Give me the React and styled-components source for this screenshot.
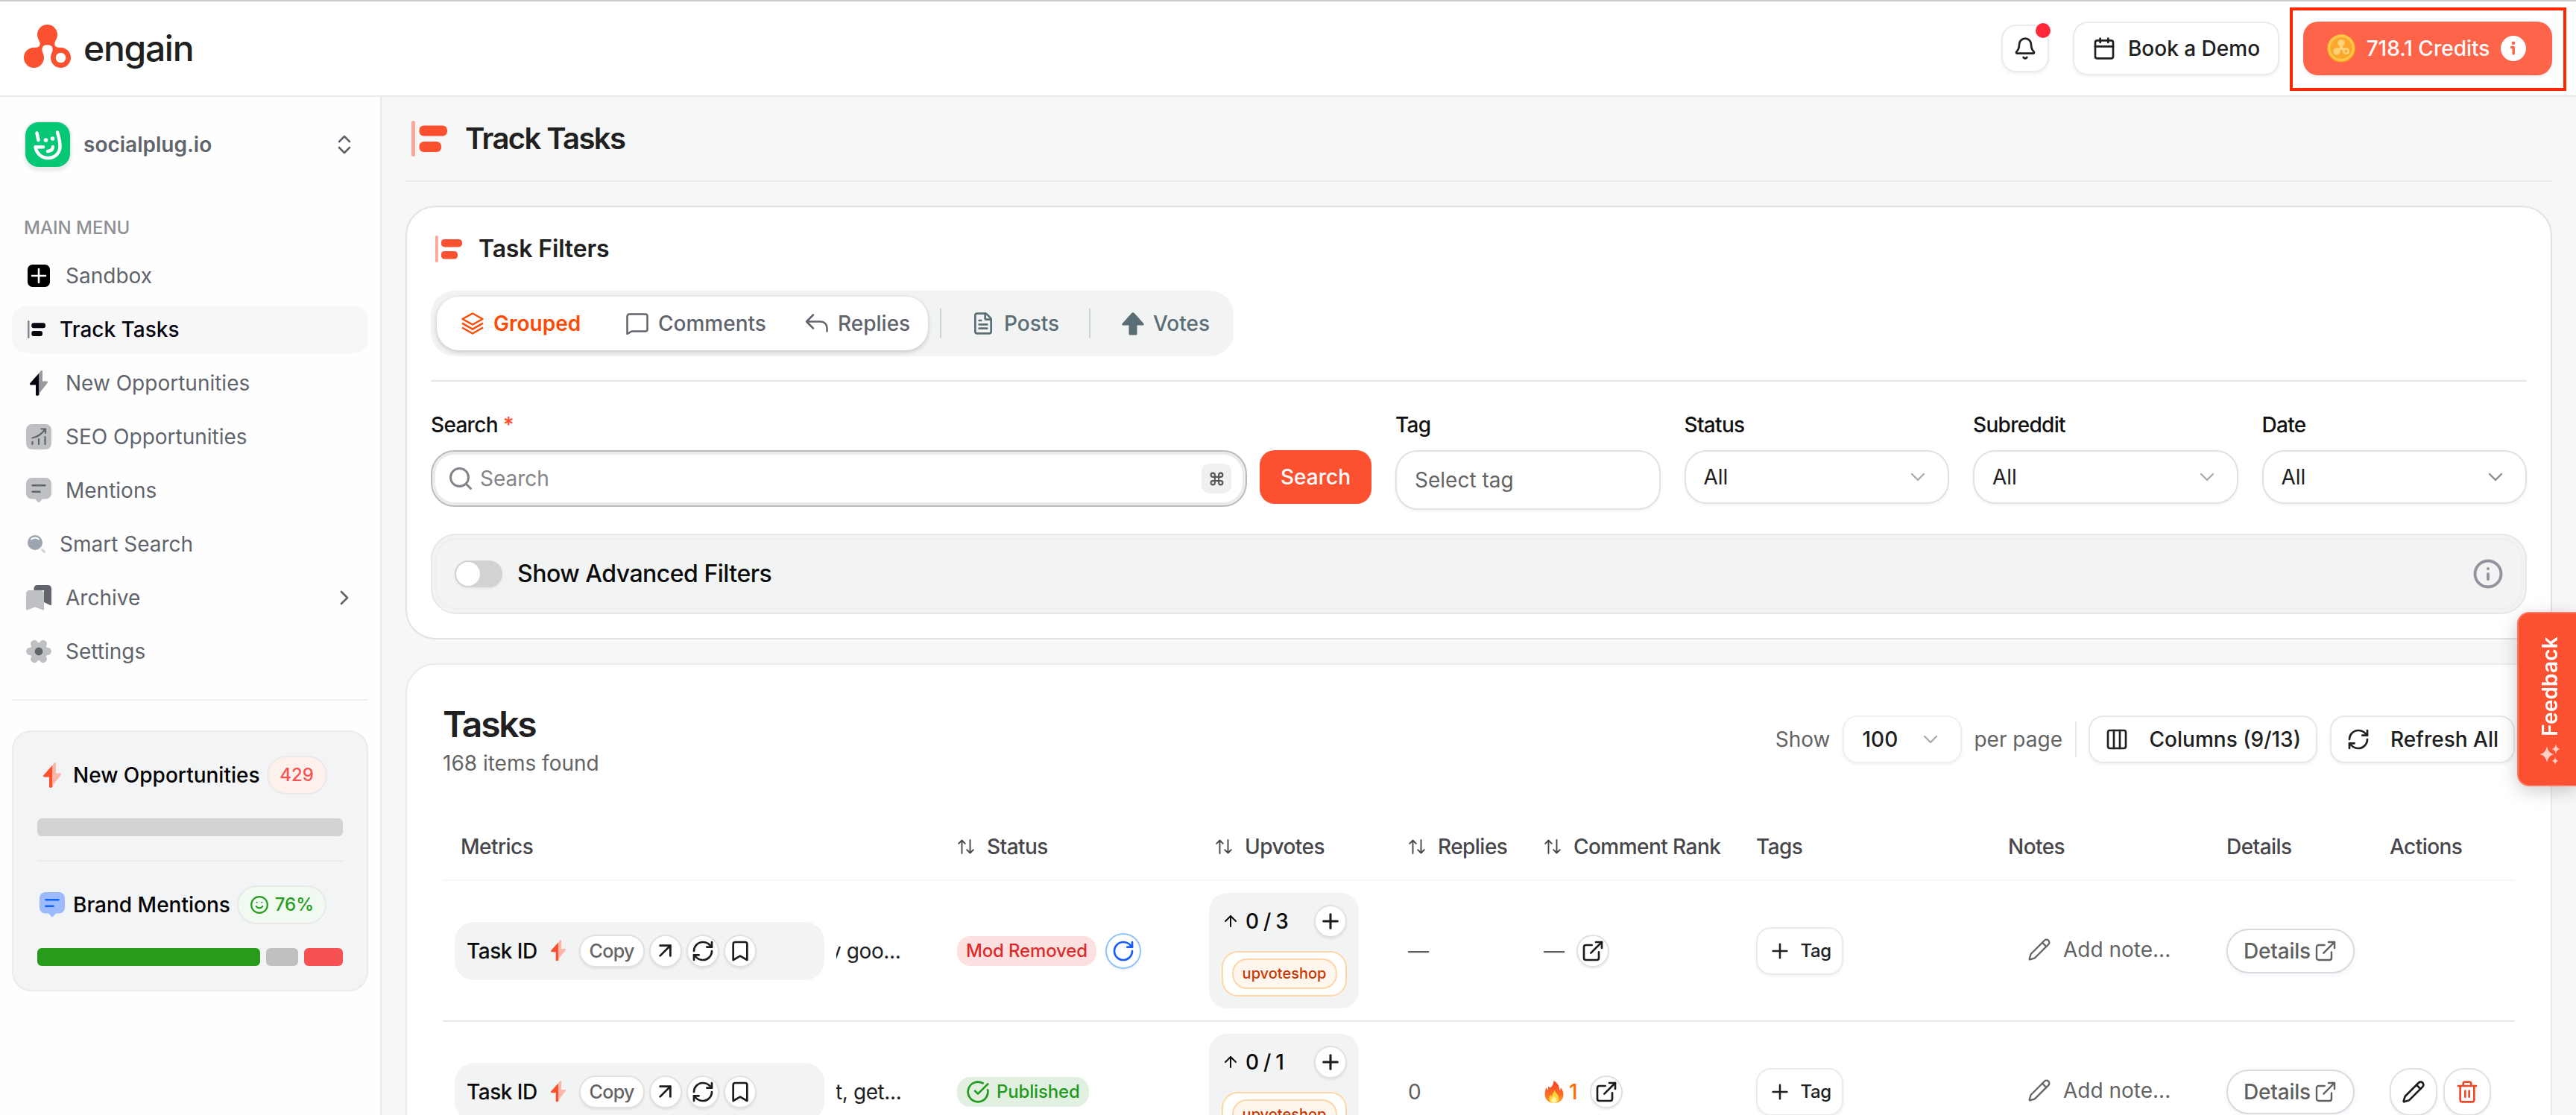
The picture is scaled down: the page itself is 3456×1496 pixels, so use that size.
import React from 'react';
import styled, { createGlobalStyle, css } from 'styled-components';
import {
  ArrowUp, ArrowUpRight, Bell, Bookmark, Calendar, ChevronDown, ChevronRight, CircleCheckBig,
  Columns3, ExternalLink, FileText, Info, Pencil, Plus, RefreshCw, RotateCw, Search, Smile, Trash2,
} from 'lucide-react';

const ORANGE = '#fc5130';
const SLATE = '#60646c';

const GlobalStyle = createGlobalStyle`
  *, *::before, *::after { box-sizing: border-box; }
  html, body { margin: 0; padding: 0; }
  body {
    font-family: Inter, "Liberation Sans", sans-serif;
    font-size: 28px;
    line-height: 40px;
    color: #202020;
    background: #f7f7f7;
    overflow: hidden;
  }
  svg { display: block; flex: none; }
  button { font: inherit; color: inherit; padding: 0; margin: 0; cursor: pointer; }
`;

/* ---------- icons ---------- */

const LogoIcon = () => (
  <svg width="63" height="58" viewBox="0 0 63 58">
    <path
      fill={ORANGE}
      d="M31.5 0C39 0 45 6 45 13.600c0 3.600-1.500 6.400-3 9.200-1 2-1 5.200.8 6.600 2 1.500 4.600 1.200 6.700 1.400C57.200 31 63 37 63 44.300 63 52 57 58 49.500 58S36 52 36 44.300c0-3.200 1-5 2-7.500.8-2 1-5.400-.4-7.300-1.400-1.800-3.800-2.300-6.100-2.300s-4.700.5-6.100 2.300c-1.400 1.900-1.200 5.300-.4 7.300 1 2.500 2 4.300 2 7.500C27 52 21 58 13.500 58S0 52 0 44.300C0 37 5.800 31 13.500 30.800c2.100-.2 4.700.1 6.700-1.400 1.800-1.400 1.800-4.600.8-6.600-1.500-2.800-3-5.600-3-9.200C18 6 24 0 31.500 0Z"
    />
    <circle cx="49.500" cy="44.500" r="6.800" fill="#fff" />
  </svg>
);

const AvatarIcon = () => (
  <svg width="60" height="60" viewBox="0 0 60 60">
    <g fill="none" stroke="#fff" strokeWidth="4.500" strokeLinecap="round" strokeLinejoin="round">
      <path d="M15.500 14.500 17.500 24" />
      <path d="M43 13.500C45 20 46.500 26 46.500 32c0 9.500-7 16-16 16S15 42 13.500 33.200H24" />
      <path d="M37 33c0 3.500-2.500 5.500-7 6" />
    </g>
    <circle cx="27.500" cy="24" r="2.800" fill="#fff" />
    <circle cx="36.500" cy="22" r="2.800" fill="#fff" />
  </svg>
);

const UpDownIcon = () => (
  <svg width="18" height="26" viewBox="0 0 18 26" fill="none" stroke={SLATE} strokeWidth="2.600" strokeLinecap="round" strokeLinejoin="round">
    <path d="M2 9l7-7 7 7M2 17l7 7 7-7" />
  </svg>
);

const SandboxIcon = () => (
  <svg width="30" height="30" viewBox="0 0 30 30">
    <rect width="30" height="30" rx="6.500" fill="#000" />
    <path d="M15 6v18M6 15h18" stroke="#fff" strokeWidth="2.600" strokeLinecap="round" />
  </svg>
);

const TrackIcon = ({ size, color = ORANGE, bar = '#fda596' }) => (
  <svg width={size} height={size} viewBox="0 0 48 48">
    <rect width="5" height="48" rx="2.500" fill={bar} />
    <rect x="10.500" y="6.500" width="37.500" height="14" rx="6" fill={color} />
    <rect x="10.500" y="28" width="29.500" height="14" rx="6" fill={color} />
  </svg>
);

const BoltIcon = ({ width = 24, dark = ORANGE, light = '#fcb7aa' }) => (
  <svg width={width} height={(width * 34) / 24} viewBox="0 0 24 34">
    <path d="M12.500 3.500V33L10 34C8.500 34 8 33.300 8 32.300V19.500H1.500C0 19.500-.4 18 .5 16.900Z" fill={dark} />
    <path d="M12.500 3.500 15 .4C15.800-.3 17 .2 17 1.500V14.500h5.800c1.300 0 1.600 1.500.7 2.600L12.500 31Z" fill={light} />
  </svg>
);

const SeoIcon = () => (
  <svg width="34" height="34" viewBox="0 0 34 34" fill="none" stroke={SLATE} strokeWidth="2.200" strokeLinecap="round" strokeLinejoin="round">
    <rect width="34" height="34" rx="8" fill="#bfc0c4" stroke="none" />
    <path d="M8.500 27v-3M17 27v-7M25.500 27V17M8.500 18.500C15 17.500 21 13 25.500 7M20.500 6.500h5.500v5.500" />
  </svg>
);

const MessageIcon = ({ bg = '#bfc0c4', line = SLATE }) => (
  <svg width="34" height="34" viewBox="0 0 34 34">
    <path d="M8 0h18a8 8 0 0 1 8 8v13a7.500 7.500 0 0 1-7.500 7.500H22l-4 4.300q-1 1-2 0l-4-4.300H7.500A7.500 7.500 0 0 1 0 21V8a8 8 0 0 1 8-8Z" fill={bg} />
    <path d="M8.500 10.200h17M8.500 18.800h10" stroke={line} strokeWidth="2.500" strokeLinecap="round" />
  </svg>
);

const SmartSearchIcon = () => (
  <svg width="26" height="26" viewBox="0 0 26 26" fill="none" strokeLinecap="round">
    <circle cx="11" cy="11" r="10" fill="#9da3b0" />
    <path d="M6 6.500q5-4 10 0" stroke="#fff" strokeWidth="2" />
    <path d="M20.500 20.500l3 3" stroke="#ced1d8" strokeWidth="3" />
  </svg>
);

const ArchiveIcon = () => (
  <svg width="34" height="34" viewBox="0 0 34 34">
    <path d="M15 0h14.500A4.500 4.500 0 0 1 34 4.500V26q0 1.500-1.500 1L24 23V7H10.500V4.500A4.500 4.500 0 0 1 15 0Z" fill={SLATE} />
    <path d="M4.500 7h15A4.500 4.500 0 0 1 24 11.500v21q0 1.700-1.500 1L12 29.500l-10.500 4Q0 34.200 0 32.500v-21A4.500 4.500 0 0 1 4.500 7Z" fill="#bfc0c4" />
  </svg>
);

const GearIcon = () => (
  <svg width="34" height="34" viewBox="0 0 34 34">
    <circle cx="17" cy="17" r="12" fill="#bfc0c4" />
    {[0, 60, 120].map((deg) => (
      <rect key={deg} x="0.300" y="12" width="33.400" height="10" rx="4.600" fill="#bfc0c4" transform={`rotate(${deg} 17 17)`} />
    ))}
    <circle cx="17" cy="17" r="5.400" fill={SLATE} />
  </svg>
);

const CoinIcon = () => (
  <svg width="38" height="38" viewBox="0 0 38 38">
    <circle cx="19" cy="19" r="19" fill="#f69a1d" />
    <circle cx="19" cy="18.300" r="18" fill="#fcc64a" />
    <circle cx="19" cy="18.500" r="14.500" fill="#fda62c" />
    <path d="M19 12v6l-5.500 5.500M19 18l5.500 4" stroke="#fdd37a" strokeWidth="4" fill="none" />
    <circle cx="19" cy="11.700" r="4.700" fill="#fdd37a" />
    <circle cx="13" cy="23" r="4.700" fill="#fdd37a" />
    <circle cx="25.500" cy="22.700" r="3.300" fill="#fda62c" stroke="#fdd37a" strokeWidth="2.600" />
  </svg>
);

const InfoFilledIcon = () => (
  <svg width="34" height="34" viewBox="0 0 34 34">
    <circle cx="17" cy="17" r="17" fill="#fff" />
    <circle cx="17" cy="9.800" r="2.300" fill="#fd6449" />
    <path d="M14.500 15.500h2.700V24" stroke="#fd6449" strokeWidth="3.400" fill="none" strokeLinecap="round" strokeLinejoin="round" />
  </svg>
);

const StackIcon = () => (
  <svg width="30" height="30" viewBox="0 0 30 30" fill="none" stroke="currentColor" strokeWidth="2.500" strokeLinejoin="round">
    <path d="M15 1.500 28.500 9 15 16.500 1.500 9Z" />
    <path d="M1 14.700l14 8 14-8M1 20.500l14 8 14-8" />
  </svg>
);

const CommentIcon = () => (
  <svg width="30" height="30" viewBox="0 0 30 30" fill="none" stroke="currentColor" strokeWidth="2.500" strokeLinejoin="round">
    <path d="M4.500 2.500h21.500a2.500 2.500 0 0 1 2.500 2.500v18a2.500 2.500 0 0 1-2.500 2.500H7.500L1.500 29V5.500a3 3 0 0 1 3-3Z" />
  </svg>
);

const ReplyIcon = () => (
  <svg width="31" height="30" viewBox="0 0 31 30" fill="none" stroke="currentColor" strokeWidth="2.500" strokeLinejoin="round" strokeLinecap="round">
    <path d="M11 3.500 2 12.500l9 9M2 12.500h19a8.500 8.500 0 0 1 8.500 8.500v4.500" />
  </svg>
);

const VoteIcon = () => (
  <svg width="30" height="31" viewBox="0 0 30 31">
    <path d="M13.500.800q1.500-1.300 3 0L29 14.800q1.800 2.500-1 2.700H20.500V29q0 1.500-1.500 1.500h-8Q9.500 30.500 9.500 29V17.500H2Q-.8 17.300 1 14.800Z" fill="currentColor" />
  </svg>
);

const SortIcon = () => (
  <svg width="22" height="20" viewBox="0 0 22 20" fill="none" stroke="#46464b" strokeWidth="1.900" strokeLinecap="round" strokeLinejoin="round">
    <path d="M5.500 19V1.500M1.200 5.800 5.500 1.500l4.300 4.300M16.500 1v17.500M12.200 14.200l4.300 4.300 4.300-4.300" />
  </svg>
);

const FireIcon = () => (
  <svg width="26" height="30" viewBox="0 0 26 30">
    <defs>
      <linearGradient id="flame" x1="0" y1="0" x2="0" y2="1">
        <stop offset="0" stopColor="#f5412d" />
        <stop offset="0.600" stopColor="#fd6b22" />
        <stop offset="1" stopColor="#fda52b" />
      </linearGradient>
    </defs>
    <path d="M12.500 0C19.500 4 20 9 20.500 13c1-.8 1.500-2.300 1.300-4C24.500 12.500 26 16.500 25.300 20.500 24.300 26.500 19.500 30 13 30S1.500 26 .8 20.500C.2 16 1.500 13 2 9.500c1.300.8 2 2 2.600 3.500.7-1.500.7-3.500.4-5.500 1.200.5 2 1.200 2.600 2C10.500 7.500 12.500 4.500 12.500 0Z" fill="url(#flame)" />
    <path d="M13.500 12.500c1 3.500 5.800 6 5.800 11 0 4-2.800 6.500-6.500 6.500s-6.400-2.300-6.400-6c0-2.200.8-3.800 2-5 .2 1.200.8 2 1.600 2.500.1-4 3-5.500 3.500-9Z" fill="#fed73c" />
    <path d="M13 20.500c.5 2 3.300 3.200 3.300 5.800 0 2-1.500 3.700-3.500 3.700s-3.500-1.500-3.500-3.600c0-2.400 3-3.400 3.700-5.900Z" fill="#fff3a3" />
  </svg>
);

const SparkleIcon = () => (
  <svg width="28" height="28" viewBox="0 0 28 28" fill="#ffd0c6">
    <path d="M10 3.500q1.800 9 9.500 10.500-7.700 1.500-9.500 10.500Q8.200 15.500.5 14 8.200 12.500 10 3.500Z" />
    <path d="M22 .5q1 5.700 5.500 6.500-4.500.8-5.500 6.500-1-5.700-5.500-6.500 4.500-.8 5.500-6.500Z" />
    <path d="M21 18q.8 4.300 4.500 5-3.700.7-4.500 5-.8-4.300-4.500-5 3.700-.7 4.500-5Z" />
  </svg>
);

/* ---------- header ---------- */

const Page = styled.div`
  width: 3456px;
  height: 1496px;
  display: flex;
  flex-direction: column;
  overflow: hidden;
  background: #f7f7f7;
`;

const Header = styled.header`
  flex: none;
  height: 130px;
  border-top: 2px solid #cacaca;
  border-bottom: 2px solid #e9e9e9;
  background: #fff;
  display: flex;
  align-items: center;
  justify-content: space-between;
  padding: 0 13px 0 32px;
`;

const Brand = styled.div`
  display: flex;
  align-items: center;
  gap: 17px;
  font-size: 48px;
  line-height: 56px;
  font-weight: 500;
  letter-spacing: -1.3px;
  color: #202020;
  padding-bottom: 6px;
`;

const BrandName = styled.span`
  margin-top: 5px;
`;

const HeaderActions = styled.div`
  display: flex;
  align-items: center;
`;

const outlined = css`
  background: #fff;
  border: 2px solid #ebebeb;
  box-shadow: 0 2px 4px rgba(0, 0, 0, 0.06);
`;

const BellButton = styled.button`
  ${outlined}
  position: relative;
  width: 64px;
  height: 64px;
  border-radius: 20px;
  display: grid;
  place-items: center;
  margin-right: 32px;
`;

const BellDot = styled.span`
  position: absolute;
  top: -4px;
  right: -4px;
  width: 20px;
  height: 20px;
  border-radius: 50%;
  background: #ff2738;
`;

const DemoButton = styled.button`
  ${outlined}
  height: 72px;
  width: 277px;
  border-radius: 20px;
  display: flex;
  align-items: center;
  justify-content: center;
  gap: 16px;
  font-weight: 500;
  margin-right: 14px;
`;

const CreditsFrame = styled.div`
  width: 371px;
  height: 112px;
  margin-top: 2px;
  border: 4px solid #ff2600;
  display: flex;
  align-items: flex-start;
  padding: 15px 0 0 14px;
`;

const CreditsButton = styled.button`
  width: 334px;
  height: 72px;
  border: 0;
  border-radius: 20px;
  background: #fd6449;
  color: #fff;
  font-weight: 500;
  display: flex;
  align-items: center;
  justify-content: center;
  gap: 15px;
  padding-right: 3px;
  box-shadow: 0 2px 4px rgba(0, 0, 0, 0.08);
`;

/* ---------- sidebar ---------- */

const Body = styled.div`
  flex: 1;
  min-height: 0;
  display: flex;
`;

const Sidebar = styled.aside`
  flex: none;
  width: 512px;
  border-right: 2px solid #e9e9eb;
  background: #fefefe;
  padding: 34px 16px 0;
`;

const Workspace = styled.div`
  display: flex;
  align-items: center;
  height: 60px;
  padding: 0 23px 0 18px;
  gap: 18px;
  font-weight: 600;
  color: ${SLATE};
`;

const WorkspaceName = styled.span`
  flex: 1;
`;

const Avatar = styled.div`
  width: 60px;
  height: 60px;
  border-radius: 18px;
  background: #06c775;
  box-shadow: 0 0 0 2px #ececec, 0 4px 6px rgba(0, 0, 0, 0.12);
`;

const MenuLabel = styled.div`
  margin: 66px 0 16px 16px;
  font-size: 24px;
  line-height: 32px;
  font-weight: 500;
  color: #8f9094;
`;

const Nav = styled.nav`
  display: flex;
  flex-direction: column;
  gap: 8px;
`;

const NavItem = styled.a`
  height: 64px;
  border-radius: 20px;
  display: flex;
  align-items: center;
  padding: 0 16px 0 ${(p) => (p.$compact ? 20 : 19)}px;
  color: ${(p) => (p.$active ? '#05060f' : SLATE)};
  font-weight: ${(p) => (p.$active ? 500 : 400)};
  background: ${(p) => (p.$active ? '#f7f7f7' : 'transparent')};
`;

const NavIcon = styled.span`
  width: ${(p) => (p.$compact ? 25 : 34)}px;
  margin-right: 19px;
  display: grid;
  place-items: center;
`;

const NavText = styled.span`
  flex: 1;
`;

const SideRule = styled.hr`
  border: 0;
  height: 2px;
  margin: 32px 0 40px;
  background: #f0f0f0;
`;

const StatsCard = styled.section`
  height: 350px;
  border: 2px solid #ebebeb;
  border-radius: 26px;
  background: #f3f4f6;
  padding: 32px;
`;

const StatsHead = styled.div`
  display: flex;
  align-items: center;
  height: 52px;
  font-weight: 500;
  color: #020202;
`;

const StatsIcon = styled.span`
  width: 40px;
  display: grid;
  place-items: center;
  margin-right: 8px;
`;

const StatsBadge = styled.span`
  height: 52px;
  width: ${(p) => p.$width}px;
  margin-left: 9px;
  border: 2px solid #e9e9e9;
  border-radius: 26px;
  display: flex;
  align-items: center;
  justify-content: center;
  gap: 8px;
  font-size: 24px;
  background: ${(p) => (p.$tone === 'green' ? '#f0faf1' : '#fef1ec')};
  color: ${(p) => (p.$tone === 'green' ? '#269c1c' : '#f75353')};
`;

const Meter = styled.div`
  display: flex;
  gap: 8px;
  height: 24px;
  margin-top: 32px;
`;

const MeterPart = styled.span`
  flex: ${(p) => p.$share} 0 0;
  border-radius: 6px;
  background: ${(p) => p.$color};
`;

const StatsRule = styled.hr`
  border: 0;
  height: 2px;
  background: #ebebeb;
  margin: 32px 0;
`;

/* ---------- main ---------- */

const Main = styled.main`
  flex: 1;
  min-width: 0;
  padding: 0 32px;
`;

const PageTitle = styled.div`
  height: 114px;
  border-bottom: 2px solid #ebebeb;
  display: flex;
  align-items: center;
  gap: 24px;
  padding: 0 0 0 8px;
  font-size: 40px;
  font-weight: 600;
  letter-spacing: -1.6px;
`;

const Card = styled.section`
  background: #fff;
  border: 2px solid ${(p) => p.$edge};
  border-radius: 40px;
`;

const FiltersCard = styled(Card)`
  height: 582px;
  margin-top: 32px;
  padding: 38px 32px 0;
`;

const CardTitle = styled.h2`
  margin: 0;
  height: 36px;
  padding-left: 6px;
  display: flex;
  align-items: center;
  gap: 22px;
  font-size: 32px;
  font-weight: 600;
  letter-spacing: -0.15px;
`;

const Tabs = styled.div`
  width: 1077px;
  height: 88px;
  margin-top: 38px;
  padding: 8px;
  border-radius: 32px;
  background: #f2f4f4;
  display: flex;
  align-items: center;
`;

const TabGroup = styled.div`
  width: 659px;
  height: 72px;
  border-radius: 30px;
  background: #fff;
  box-shadow: 0 2px 6px rgba(0, 0, 0, 0.2);
  display: flex;
  align-items: center;
`;

const Tab = styled.span`
  display: flex;
  align-items: center;
  gap: ${(p) => p.$gap || 13}px;
  margin-left: ${(p) => p.$left}px;
  width: ${(p) => p.$width}px;
  white-space: nowrap;
  font-weight: ${(p) => (p.$active ? 600 : 500)};
  color: ${(p) => (p.$active ? '#fb4b07' : p.$cool ? '#5b6d74' : SLATE)};
`;

const TabDivider = styled.span`
  width: 2px;
  height: 40px;
  margin-left: ${(p) => p.$left}px;
  background: #cfd2d6;
`;

const FilterRule = styled.hr`
  border: 0;
  height: 2px;
  background: #e4e4ea;
  margin: 32px 0 38px;
`;

const FilterGrid = styled.div`
  display: grid;
  grid-template-columns: 1262px repeat(4, 1fr);
  column-gap: 32px;
  align-items: start;
  height: 166px;
`;

const Field = styled.div`
  display: flex;
  flex-direction: column;
  gap: 14px;
`;

const Label = styled.label`
  font-weight: 500;
  letter-spacing: -0.7px;
  color: #111;
`;

const Required = styled.span`
  color: ${ORANGE};
  font-weight: 600;
  margin-left: 7px;
`;

const SearchRow = styled.div`
  display: flex;
  align-items: flex-start;
  gap: 17px;
`;

const SearchBox = styled.div`
  flex: 1;
  height: 76px;
  border: 2px solid #bbb;
  border-radius: 32px;
  box-shadow: inset 0 0 0 4px #ebebeb;
  background: #fff;
  display: flex;
  align-items: center;
  padding: 0 19px 0 20px;
  color: #83848a;
`;

const SearchHint = styled.span`
  flex: 1;
  margin-left: 8px;
`;

const Key = styled.kbd`
  width: 40px;
  height: 40px;
  border-radius: 10px;
  background: #f0f0f0;
  color: #55565a;
  display: grid;
  place-items: center;
`;

const SearchButton = styled.button`
  width: 150px;
  height: 72px;
  border: 0;
  border-radius: 20px;
  background: ${ORANGE};
  color: #fff;
  font-weight: 500;
`;

const SelectBox = styled.div`
  height: ${(p) => p.$height || 72}px;
  border: 2px solid #e1e1e7;
  border-radius: 30px;
  background: #fff;
  box-shadow: 0 2px 4px rgba(0, 0, 0, 0.05);
  display: flex;
  align-items: center;
  justify-content: space-between;
  padding: 0 24px;
  color: ${(p) => (p.$muted ? '#646464' : '#202020')};
`;

const Advanced = styled.div`
  height: 108px;
  border: 2px solid #e6e8e8;
  border-radius: 34px;
  background: #f2f4f4;
  padding: 4px;
`;

const AdvancedInner = styled.div`
  height: 100%;
  border: 2px solid #edefef;
  border-radius: 28px;
  display: flex;
  align-items: center;
  padding: 0 23px 0 24px;
  font-size: 32px;
  font-weight: 500;
  letter-spacing: -0.5px;
  color: #0c0c0d;
`;

const Switch = styled.span`
  width: 64px;
  height: 36px;
  border-radius: 18px;
  background: #d1d3d3;
  padding: 2px;
  margin-right: 20px;
  box-shadow: 0 2px 3px rgba(0, 0, 0, 0.06);

  &::before {
    content: '';
    display: block;
    width: 32px;
    height: 32px;
    border-radius: 50%;
    background: #fff;
  }
`;

const AdvancedText = styled.span`
  flex: 1;
`;

/* ---------- tasks ---------- */

const TasksCard = styled(Card)`
  height: 700px;
  margin-top: 32px;
  padding: 48px 48px 0;
`;

const TasksHead = styled.div`
  display: flex;
  justify-content: space-between;
  height: 150px;
`;

const TasksTitle = styled.h1`
  margin: 0;
  height: 64px;
  font-size: 48px;
  line-height: 64px;
  font-weight: 600;
  letter-spacing: -2.3px;
`;

const TasksCount = styled.div`
  color: #646464;
`;

const Tools = styled.div`
  display: flex;
  align-items: center;
  height: 64px;
  margin-top: 20px;
  color: #646464;
`;

const ToolDivider = styled.span`
  width: 2px;
  height: 48px;
  background: #e8e8e8;
  margin: 0 16px 0 17px;
`;

const ToolButton = styled.button`
  ${outlined}
  height: 64px;
  width: ${(p) => p.$width}px;
  border-radius: 20px;
  border-color: ${(p) => (p.$soft ? '#f0f0f0' : '#e8e8e8')};
  margin: ${(p) => p.$margin || 0};
  padding: 0 ${(p) => (p.$between ? 24 : 20)}px;
  display: flex;
  align-items: center;
  justify-content: space-between;
  font-weight: 500;
  color: #202020;
  white-space: nowrap;
`;

const Row = styled.div`
  display: grid;
  grid-template-columns: 674px 338px 266px 182px 286px 338px 292px 220px 184px;
  align-items: center;
  height: ${(p) => (p.$head ? 92 : 189)}px;
  padding-top: ${(p) => (p.$head ? 2 : 0)}px;
  border-bottom: 2px solid ${(p) => (p.$head ? '#f5f5f5' : '#e9e9e9')};
`;

const Cell = styled.div`
  display: flex;
  align-items: center;
  padding-left: ${(p) => p.$left || 16}px;
  white-space: nowrap;
  color: ${(p) => p.$color || 'inherit'};
`;

const HeadCell = styled(Cell)`
  gap: 17px;
  font-weight: 500;
  letter-spacing: -0.55px;
  color: #46464b;
`;

const TaskPill = styled.div`
  width: 496px;
  height: 78px;
  border-radius: 26px;
  background: #f2f4f4;
  display: flex;
  align-items: center;
  padding-left: 16px;
  font-weight: 500;
  letter-spacing: -0.5px;
  color: #0a0a0a;
`;

const PillBolt = styled.span`
  margin: 0 18px 0 18px;
`;

const round = css`
  background: #fff;
  border: 2px solid #e1e1e1;
  box-shadow: 0 2px 3px rgba(0, 0, 0, 0.08);
`;

const CopyButton = styled.button`
  ${round}
  width: 88px;
  height: 44px;
  border-radius: 22px;
  font-size: 25px;
  line-height: 36px;
  font-weight: 500;
  letter-spacing: -0.6px;
  color: #646464;
`;

const RoundButton = styled.button`
  ${round}
  width: 44px;
  height: 44px;
  margin-left: ${(p) => p.$left ?? 6}px;
  border-radius: 50%;
  display: grid;
  place-items: center;
  color: #1c1c1c;
`;

const Snippet = styled.div`
  width: 100px;
  margin-left: 16px;
  overflow: hidden;
  letter-spacing: -0.4px;
  color: #1d1f24;

  span { margin-left: -${(p) => p.$cut}px; }
`;

const StatusBadge = styled.span`
  height: 40px;
  padding: 0 12px;
  border-radius: 18px;
  display: flex;
  align-items: center;
  gap: 9px;
  font-size: 24px;
  font-weight: 500;
  letter-spacing: -0.15px;
  background: ${(p) => (p.$tone === 'red' ? '#fde1e1' : '#e1f0e1')};
  color: ${(p) => (p.$tone === 'red' ? '#dc2a2a' : '#219a1b')};
`;

const RetryButton = styled.button`
  width: 48px;
  height: 48px;
  margin-left: 12px;
  border: 2px solid #8ec5ff;
  border-radius: 50%;
  background: #fff;
  color: #155dfc;
  display: grid;
  place-items: center;
  box-shadow: 0 2px 3px rgba(0, 0, 0, 0.06);
`;

const VoteBox = styled.div`
  width: 201px;
  height: 155px;
  padding: 16px 16px 16px 17px;
  border-radius: 24px;
  background: #f2f4f4;
  display: flex;
  flex-direction: column;
  justify-content: space-between;
`;

const VoteTop = styled.div`
  display: flex;
  align-items: center;
  justify-content: space-between;
  font-weight: 500;
  letter-spacing: -0.8px;
  color: #0a0a0a;
`;

const VoteCount = styled.span`
  display: flex;
  align-items: center;
  gap: 8px;
`;

const Shop = styled.div`
  height: 61px;
  border: 2px solid #ffd6a7;
  border-radius: 22px;
  background: #fff;
  display: grid;
  place-items: center;
`;

const ShopName = styled.span`
  width: 141px;
  height: 41px;
  border: 2px solid #ffd6a7;
  border-radius: 20px;
  background: #fff7ed;
  color: #ca3500;
  font-size: 20px;
  line-height: 36px;
  font-weight: 500;
  text-align: center;
`;

const Rank = styled.span`
  display: flex;
  align-items: center;
  gap: 7px;
  margin-left: 1px;
  font-weight: 500;
  color: #ff6900;
`;

const TagButton = styled.button`
  ${outlined}
  width: 117px;
  height: 64px;
  border-radius: 20px;
  display: flex;
  align-items: center;
  justify-content: center;
  gap: 11px;
  font-size: 24px;
  font-weight: 500;
  letter-spacing: -0.4px;
`;

const Note = styled.span`
  display: flex;
  align-items: center;
  gap: 16px;
  margin: 0 0 4px 26px;
  color: #646464;
`;

const DetailsButton = styled.button`
  width: 172px;
  height: 60px;
  margin-left: 1px;
  border: 2px solid #dadada;
  border-radius: 30px;
  background: #fff;
  box-shadow: 0 2px 6px rgba(60, 80, 200, 0.08);
  display: flex;
  align-items: center;
  justify-content: center;
  gap: 4px;
  font-weight: 500;
  letter-spacing: -0.2px;
  color: #606060;
`;

const ActionButton = styled.button`
  ${round}
  width: 64px;
  height: 64px;
  margin-right: 8px;
  border-radius: 28px;
  display: grid;
  place-items: center;
  color: ${(p) => p.$color || '#1c1c1c'};
`;

const FeedbackTab = styled.button`
  position: fixed;
  top: 821px;
  right: 0;
  width: 79px;
  height: 234px;
  border: 2px solid #ff7a60;
  border-right: 0;
  border-radius: 16px 0 0 16px;
  background: ${ORANGE};
  color: #fff;
  box-shadow: 0 6px 24px rgba(0, 0, 0, 0.2);
  display: flex;
  flex-direction: column;
  align-items: center;
  justify-content: center;
  gap: 11px;
  padding: 4px 0 0 6px;
  font-weight: 600;
  letter-spacing: 0.2px;
`;

const FeedbackText = styled.span`
  writing-mode: vertical-rl;
  transform: rotate(180deg);
  line-height: 34px;
`;

/* ---------- data ---------- */

const navItems = [
  { label: 'Sandbox', icon: <SandboxIcon /> },
  { label: 'Track Tasks', icon: <TrackIcon size={24} color="#05060f" bar="#85868b" />, active: true, compact: true },
  { label: 'New Opportunities', icon: <BoltIcon dark="#05060f" light="#98999d" /> },
  { label: 'SEO Opportunities', icon: <SeoIcon /> },
  { label: 'Mentions', icon: <MessageIcon /> },
  { label: 'Smart Search', icon: <SmartSearchIcon />, compact: true },
  { label: 'Archive', icon: <ArchiveIcon />, more: true },
  { label: 'Settings', icon: <GearIcon /> },
];

const headings = [
  { label: 'Metrics', left: 24 },
  { label: 'Status', sort: true, left: 17 },
  { label: 'Upvotes', sort: true, left: 25 },
  { label: 'Replies', sort: true, left: 18 },
  { label: 'Comment Rank', sort: true, left: 18 },
  { label: 'Tags' },
  { label: 'Notes', left: 16 },
  { label: 'Details', left: 17 },
  { label: 'Actions' },
];

const tasks = [
  { snippet: 'y goo...', cut: 9, removed: true, votes: '0 / 3', replies: '—' },
  { snippet: 't, get...', cut: 1, votes: '0 / 1', replies: '0', rank: '1', editable: true },
];

function TaskRow({ task }) {
  return (
    <Row>
      <Cell>
        <TaskPill>
          Task ID
          <PillBolt><BoltIcon width={20} /></PillBolt>
          <CopyButton>Copy</CopyButton>
          <RoundButton><ArrowUpRight size={33} /></RoundButton>
          <RoundButton><RefreshCw size={32} /></RoundButton>
          <RoundButton><Bookmark size={32} /></RoundButton>
        </TaskPill>
        <Snippet $cut={task.cut}><span>{task.snippet}</span></Snippet>
      </Cell>
      <Cell>
        {task.removed ? (
          <>
            <StatusBadge $tone="red">Mod Removed</StatusBadge>
            <RetryButton><RotateCw size={32} /></RetryButton>
          </>
        ) : (
          <StatusBadge $tone="green"><CircleCheckBig size={32} />Published</StatusBadge>
        )}
      </Cell>
      <Cell>
        <VoteBox>
          <VoteTop>
            <VoteCount><ArrowUp size={24} />{task.votes}</VoteCount>
            <RoundButton><Plus size={32} strokeWidth={2.3} /></RoundButton>
          </VoteTop>
          <Shop><ShopName>upvoteshop</ShopName></Shop>
        </VoteBox>
      </Cell>
      <Cell $color="#606060" $left={17}>{task.replies}</Cell>
      <Cell $color="#606060" $left={17}>
        {task.rank ? <Rank><FireIcon />{task.rank}</Rank> : '—'}
        <RoundButton $left={16}><ExternalLink size={32} /></RoundButton>
      </Cell>
      <Cell><TagButton><Plus size={32} strokeWidth={1.9} />Tag</TagButton></Cell>
      <Cell><Note><Pencil size={32} strokeWidth={1.7} />Add note...</Note></Cell>
      <Cell><DetailsButton>Details<ExternalLink size={32} strokeWidth={1.8} /></DetailsButton></Cell>
      <Cell>
        {task.editable && (
          <>
            <ActionButton><Pencil size={32} /></ActionButton>
            <ActionButton $color="#ea4a2a"><Trash2 size={32} /></ActionButton>
          </>
        )}
      </Cell>
    </Row>
  );
}

export default function App() {
  return (
    <>
      <GlobalStyle />
      <Page>
        <Header>
          <Brand><LogoIcon /><BrandName>engain</BrandName></Brand>
          <HeaderActions>
            <BellButton><Bell size={32} /><BellDot /></BellButton>
            <DemoButton><Calendar size={32} />Book a Demo</DemoButton>
            <CreditsFrame>
              <CreditsButton><CoinIcon />718.1 Credits<InfoFilledIcon /></CreditsButton>
            </CreditsFrame>
          </HeaderActions>
        </Header>
        <Body>
          <Sidebar>
            <Workspace>
              <Avatar><AvatarIcon /></Avatar>
              <WorkspaceName>socialplug.io</WorkspaceName>
              <UpDownIcon />
            </Workspace>
            <MenuLabel>MAIN MENU</MenuLabel>
            <Nav>
              {navItems.map((item) => (
                <NavItem key={item.label} $active={item.active} $compact={item.compact}>
                  <NavIcon $compact={item.compact}>{item.icon}</NavIcon>
                  <NavText>{item.label}</NavText>
                  {item.more && <ChevronRight size={32} strokeWidth={2} />}
                </NavItem>
              ))}
            </Nav>
            <SideRule />
            <StatsCard>
              <StatsHead>
                <StatsIcon><BoltIcon /></StatsIcon>
                New Opportunities
                <StatsBadge $width={81}>429</StatsBadge>
              </StatsHead>
              <Meter><MeterPart $share={1} $color="#d2d2d2" /></Meter>
              <StatsRule />
              <StatsHead>
                <StatsIcon><MessageIcon bg="#9dbafd" line="#0b62fd" /></StatsIcon>
                Brand Mentions
                <StatsBadge $tone="green" $width={120}><Smile size={26} />76%</StatsBadge>
              </StatsHead>
              <Meter>
                <MeterPart $share={299} $color="#279b1c" />
                <MeterPart $share={43} $color="#c0c0c0" />
                <MeterPart $share={52} $color="#f75252" />
              </Meter>
            </StatsCard>
          </Sidebar>
          <Main>
            <PageTitle><TrackIcon size={48} /><span>Track Tasks</span></PageTitle>
            <FiltersCard $edge="#e1e2e8">
              <CardTitle><TrackIcon size={36} />Task Filters</CardTitle>
              <Tabs>
                <TabGroup>
                  <Tab $active $left={33} $width={188}><StackIcon />Grouped</Tab>
                  <Tab $left={33} $width={188}><CommentIcon />Comments</Tab>
                  <Tab $left={52} $width={150}><ReplyIcon />Replies</Tab>
                </TabGroup>
                <TabDivider $left={16} />
                <Tab $cool $left={40} $width={118} $gap={12}><FileText size={32} />Posts</Tab>
                <TabDivider $left={40} />
                <Tab $cool $left={42} $width={120} $gap={12}><VoteIcon />Votes</Tab>
              </Tabs>
              <FilterRule />
              <FilterGrid>
                <Field>
                  <Label>Search<Required>*</Required></Label>
                  <SearchRow>
                    <SearchBox>
                      <Search size={36} />
                      <SearchHint>Search</SearchHint>
                      <Key>
                        <svg width="21" height="21" viewBox="0 0 24 24" fill="none" stroke="currentColor" strokeWidth="2.400">
                          <path d="M15 6v12a3 3 0 1 0 3-3H6a3 3 0 1 0 3 3V6a3 3 0 1 0-3 3h12a3 3 0 1 0-3-3" />
                        </svg>
                      </Key>
                    </SearchBox>
                    <SearchButton>Search</SearchButton>
                  </SearchRow>
                </Field>
                <Field><Label>Tag</Label><SelectBox $height={80} $muted>Select tag</SelectBox></Field>
                {['Status', 'Subreddit', 'Date'].map((label) => (
                  <Field key={label}>
                    <Label>{label}</Label>
                    <SelectBox>All<ChevronDown size={32} strokeWidth={1.8} color={label === 'Date' ? '#8a8a8a' : '#ababab'} /></SelectBox>
                  </Field>
                ))}
              </FilterGrid>
              <Advanced>
                <AdvancedInner>
                  <Switch />
                  <AdvancedText>Show Advanced Filters</AdvancedText>
                  <Info size={42} strokeWidth={2.2} color="#92939d" />
                </AdvancedInner>
              </Advanced>
            </FiltersCard>
            <TasksCard $edge="#ebebeb">
              <TasksHead>
                <div>
                  <TasksTitle>Tasks</TasksTitle>
                  <TasksCount>168 items found</TasksCount>
                </div>
                <Tools>
                  Show
                  <ToolButton $soft $between $width={160} $margin="0 16px 0 17px">
                    100<ChevronDown size={32} strokeWidth={1.8} color="#ababab" />
                  </ToolButton>
                  per page
                  <ToolDivider />
                  <ToolButton $width={307}><Columns3 size={32} />Columns (9/13)</ToolButton>
                  <ToolButton $width={248} $margin="0 0 0 17px"><RefreshCw size={32} />Refresh All</ToolButton>
                </Tools>
              </TasksHead>
              <Row $head>
                {headings.map((h) => (
                  <HeadCell key={h.label} $left={h.left}>{h.sort && <SortIcon />}{h.label}</HeadCell>
                ))}
              </Row>
              {tasks.map((task) => <TaskRow key={task.votes} task={task} />)}
            </TasksCard>
          </Main>
        </Body>
        <FeedbackTab><FeedbackText>Feedback</FeedbackText><SparkleIcon /></FeedbackTab>
      </Page>
    </>
  );
}
